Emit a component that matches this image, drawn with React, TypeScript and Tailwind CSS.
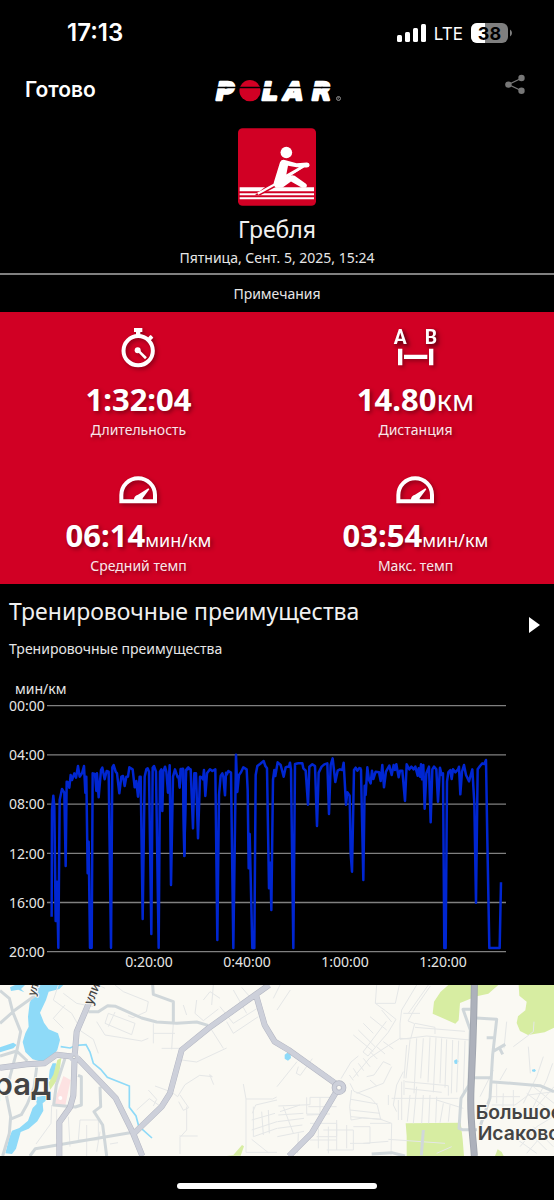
import type { ReactNode } from 'react';

type Segment = {
  x: number;
  y: number;
  points: string;
};

// Pace samples, three units to a pixel, stored in consecutive chunks
const paceSegments: Segment[] = [
  {
    x: 0,
    y: 0,
    points:
      '155,710 156,390 160,347 163,380 167,723 171,605 175,803 179,360 186,327 193,338 197,558 200,305 205,308 208,323 212,285 216,300 223,280 228,293 234,258 239,290 246,280 252,258 256,338 259,290 263,580 266,485 270,803 275,803 278,280 285,282 289,333 291,280 296,352 303,270 307,263 314,298 320,273 326,275 333,803 337,262 341,255 347,275 351,280 358,340 364,290 369,288 374,318 379,290 384,290 388,262 398,268 404,322 409,303 414,350 419,290 422,290 428,717 434,290 439,268 443,265 447,275 454,762 458,263 462,258 468,275 476,803 480,275 484,268 487,393 490,275 495,260 499,275 504,338 509,256 513,615 519,290 525,268 529,280 533,292 536,290 539,323 542,267 549,268 553,527 558,270 565,262 569,270',
  },
  {
    x: 540,
    y: 180,
    points:
      '-1,140 3,88 9,86 13,348 18,92 24,84 32,88 39,265 43,100 48,100 54,295 60,110 65,112 69,118 72,90 76,168 81,100 90,88 97,93 106,88 112,600 117,165 122,108 127,100 130,110 135,166 138,98 141,103 145,93 153,98 160,624 168,44 172,156 177,105 183,97 190,82 200,88 203,150 206,385 209,282 217,624 223,624 227,105 232,78 240,72 251,63 256,78 261,85 267,445 271,368 274,510 279,120 283,90 286,108 293,67 302,75 311,110 317,82 322,80 327,80 330,68 333,90 340,624 345,72 355,70 367,70 370,85 377,92 384,194 388,80 397,73 405,78 411,258 416,98 425,80 433,73 442,70 447,222 452,75 458,55 466,126 473,92 480,88 487,90 491,68 498,194 502,157 509,167 512,340 516,395 522,90 527,83 532,92 540,82',
  },
  {
    x: 1050,
    y: 180,
    points:
      '30,82 33,90 40,420 44,137 47,165 52,82 57,120 62,130 66,92 70,117 77,95 87,97 92,123 97,75 102,142 108,95 118,77 125,105 131,75 135,90 139,73 146,112 150,92 157,92 165,183 170,73 178,88 184,80 191,88 196,80 203,107 206,85 210,110 213,73 216,118 220,75 224,206 229,100 237,80 242,247 247,88 252,80 259,88 264,185 270,83 275,105 279,100 283,624 287,624 291,125 295,97 301,90 305,117 309,88 316,97 324,88 327,80 331,163 336,95 342,75 348,105 357,124 367,88 373,190 378,488 383,88 390,78 397,70 403,72 408,60 412,300 418,624 449,624 453,427',
  },
];

const paceTicks = ['00:00', '04:00', '08:00', '12:00', '16:00', '20:00'];
const timeTicks = ['0:20:00', '0:40:00', '1:00:00', '1:20:00'];

function StatusBar() {
  return (
    <div className="flex h-[66px] items-center justify-between pl-[67px] pr-[42px] font-['Inter',sans-serif]">
      <span className="text-2xl font-semibold">17:13</span>
      <div className="flex items-center gap-2">
        <svg width="29" height="18" viewBox="0 0 29 18" fill="white">
          <rect x="0" y="11" width="5" height="7" rx="1.5" />
          <rect x="8" y="8" width="5" height="10" rx="1.5" />
          <rect x="16" y="4" width="5" height="14" rx="1.5" />
          <rect x="24" y="0" width="5" height="18" rx="1.5" />
        </svg>
        <span className="pt-[2px] text-[17px] leading-5">LTE</span>
        <svg width="41" height="20" viewBox="0 0 41 20">
          <clipPath id="battery">
            <rect width="37" height="20" rx="6" />
          </clipPath>
          <g clipPath="url(#battery)">
            <rect width="37" height="20" fill="#7f7f7f" />
            <rect width="14" height="20" fill="white" />
          </g>
          <path d="M39 6.500q2 1 2 3.500t-2 3.500z" fill="#7f7f7f" />
          <text
            x="18.500"
            y="16.500"
            textAnchor="middle"
            className="text-lg font-bold">
            38
          </text>
        </svg>
      </div>
    </div>
  );
}

function PolarLogo() {
  return (
    <svg
      width="130"
      height="22"
      viewBox="212 80 130 22"
      className="overflow-visible"
      role="img"
      aria-label="Polar">
      <g
        fill="white"
        stroke="white"
        strokeWidth="2.500"
        strokeLinejoin="round"
        className="font-['DejaVu_Sans',sans-serif] text-[25px] font-bold italic">
        <text x="216" y="99.500">
          P
        </text>
        <text x="262 284 312" y="99.500">
          LAR
        </text>
      </g>
      <circle cx="250" cy="90.700" r="10.600" fill="#d10024" />
      <path d="M212 87.500h126" stroke="black" strokeWidth="1.600" />
      <circle
        cx="338.500"
        cy="98.500"
        r="2"
        fill="none"
        stroke="#aaa"
        strokeWidth="0.800"
      />
      <path d="M338 99.500v-2h1l-.5 1 .8 1" stroke="#aaa" strokeWidth=".4" fill="none" />
    </svg>
  );
}

function Header() {
  return (
    <header className="grid h-12 grid-cols-3 items-center px-[25px]">
      <button
        type="button"
        className="justify-self-start font-['Inter',sans-serif] text-[21px] font-semibold">
        Готово
      </button>
      <div className="justify-self-center pt-[2px]">
        <PolarLogo />
      </div>
      <button
        type="button"
        aria-label="Поделиться"
        className="justify-self-end pb-3 pr-1">
        <svg width="20" height="20" viewBox="0 0 20 20" fill="#777">
          <path
            d="M17 4 3.500 10.500 17 17"
            fill="none"
            stroke="#777"
            strokeWidth="1.300"
          />
          <circle cx="16.500" cy="4" r="3.200" />
          <circle cx="3.400" cy="10.600" r="3.200" />
          <circle cx="16.500" cy="16.700" r="3.200" />
        </svg>
      </button>
    </header>
  );
}

function RowingIcon() {
  return (
    <svg width="78" height="78" viewBox="203 175 234 233">
      <rect x="203" y="175" width="234" height="233" rx="14" fill="#d10024" />
      <g fill="white">
        <path d="M208 352h223v12H208zM208 370h223v6H208zM208 382h223v6H208z" />
        <path d="M253 376 290 347 324 347 270 376z" fill="#d10024" />
        <path d="M262 372 318 341" stroke="white" strokeWidth="7" />
        <circle cx="348" cy="248" r="17.500" />
        <path d="M329 277q5-10 17-6l33 9 31-2q8 1 8 8-1 7-9 7h-8l-50 29 10-5q6-2 12 1l34 24q6 6-1 12h-11l-33-19-26 19h-19q-10-7-6-18z" />
        <path d="M353 288 379 292 386 292 348 314z" fill="#d10024" />
        <path d="M400 289 354 319" stroke="white" strokeWidth="6" />
      </g>
    </svg>
  );
}

function StopwatchIcon() {
  return (
    <svg width="46" height="40" viewBox="347 54 138 120" fill="white">
      <circle
        cx="413.500"
        cy="122"
        r="44"
        fill="none"
        stroke="white"
        strokeWidth="12"
      />
      <path d="M401 54h25v12h-6v10h-13V66h-6z" />
      <path d="m442 84 8-9 4 2 5 6-9 9z" />
      <circle cx="412" cy="121" r="9" />
      <path
        d="m413 121 21 21"
        stroke="white"
        strokeWidth="8"
        strokeLinecap="square"
      />
    </svg>
  );
}

function DistanceIcon() {
  return (
    <svg
      width="46"
      height="40"
      viewBox="348 54 138 120"
      className="overflow-visible font-['Liberation_Sans_Narrow','Roboto',sans-serif] text-[58px] font-bold"
      fill="white">
      <text x="370" y="103" textAnchor="middle">
        A
      </text>
      <text x="462" y="103" textAnchor="middle">
        B
      </text>
      <path d="M363 116h13v50h-13zM456 116h13v50h-13zM381 134h70v13h-70z" />
    </svg>
  );
}

function GaugeIcon() {
  return (
    <svg width="46" height="40" viewBox="347 462 138 120" fill="white">
      <path
        d="M363 574v-19a50.500 50.500 0 0 1 101 0v19z"
        fill="none"
        stroke="white"
        strokeWidth="12"
      />
      <path d="M401 570q-1-12 12-16l31-19 3 3-20 27v6z" />
    </svg>
  );
}

function Stat({
  icon,
  value,
  unit,
  unitClass,
  label,
}: {
  icon: ReactNode;
  value: string;
  unit?: string;
  unitClass?: string;
  label: string;
}) {
  return (
    <div className="flex flex-col items-center pb-2 pt-4 text-shadow-[2px_2px_4px_rgb(0_0_0/0.4)]">
      <div className="drop-shadow-[2px_2px_2px_rgb(0_0_0/0.35)]">{icon}</div>
      <p className="mt-[11px] whitespace-nowrap text-[31px] leading-10">
        <span className="font-bold">{value}</span>
        {unit && <span className={unitClass}>{unit}</span>}
      </p>
      <p className="mt-px text-sm text-[#fbe6ea]">{label}</p>
    </div>
  );
}

function PaceChart() {
  return (
    <svg
      viewBox="0 0 554 305"
      className="block w-full text-sm"
      fill="#e6e6e6"
      role="img"
      aria-label="мин/км">
      <text x="15" y="14">
        мин/км
      </text>
      {paceTicks.map((tick, i) => (
        <g key={tick}>
          <path
            d={`M47 ${25.7 + i * 49.2}H506`}
            stroke="#808080"
            strokeWidth="1.300"
          />
          <text x="9" y={31 + i * 49.2}>
            {tick}
          </text>
        </g>
      ))}
      {timeTicks.map((tick, i) => (
        <text key={tick} x={149 + i * 98} y="287" textAnchor="middle">
          {tick}
        </text>
      ))}
      <g
        transform="scale(0.33333)"
        fill="none"
        stroke="#0026d1"
        strokeWidth="7.500"
        strokeLinejoin="round">
        {paceSegments.map((segment) => (
          <polyline
            key={segment.x}
            transform={`translate(${segment.x} ${segment.y})`}
            points={segment.points}
          />
        ))}
      </g>
    </svg>
  );
}

function RouteMap() {
  return (
    <svg
      viewBox="0 15 1662 513"
      className="block w-full bg-[#faf9f3]"
      role="img"
      aria-label="Карта">
      {/* water */}
      <g fill="#8edaf8">
        <path d="M105 15h85l-12 12-32 8-8 25-18 38 12 30 14 20 28 12 6 20-8 30-18 24-26 12-30-8-22-22-8-30 8-26 10-20-2-30 5-42 8-15z" />
        <path d="M30 22 45 15h30l-12 12 10 10-18-8-22 4z" />
        <path d="M0 202 40 188 50 195 40 205 0 217z" />
        <path d="M158 250h10l-2 28-10 22-10-2 3-28zM108 352l30-6 2 14-12 10 2 22-18 32-26 22-24 10-14 50-12 16-20-2 12-48 8-20 22-8 26-22 14-38 12-12z" />
        <path d="m23 0 8-6 10 6 1 10-9 8-10-6z" transform="translate(831 224)" />
        <path d="m1362 242 7-4 7 5-5 9-7-1zM1596 269l8-2 4 5-5 4-7-2z" />
      </g>
      <path
        d="m182 200 28 4 20-8 28-2 12 22 10 34 22 18 20 24 66 26v64l20 26 8 30 40 36"
        fill="none"
        stroke="#8edaf8"
        strokeWidth="5"
      />
      {/* parks */}
      <g fill="#d7eda2">
        <path d="M1345 15h150l-30 26-35 8-50 20-4 52-10 10-68-30 4-36 20-30z" />
        <path d="M1556 15h106v128l-28 14-50 8-24-12-10-24 4-20 22-18 4-26-22-18z" />
        <path d="M1217 430l165-2 6 50 4 50h-172v-60zM1485 528l8-20 12 8 6 12zM680 527l20-2 26-30 6 4-10 28zM172 240l12-6-8 60-26 36-4-22 14-24z" />
      </g>
      <path d="m190 288 22 12-16 76-36-4z" fill="#fde2e2" />
      <circle cx="181" cy="354" r="6" fill="#fff" />
      {/* footpaths and side streets */}
      <g fill="none" stroke="#e5e7e7" strokeWidth="3">
        <path d="M175 15 160 60 215 100 232 130M190 40l40 30 50 10M195 75l-35 40 30 30M295 15l20 10M345 15l25 20 75 30-6 30-40 18-15-6M325 100l80 30-10 34-80-34zM345 96l-20 44M290 125l25 40 50 8 60 10 20-8M235 148l45 30 15 42M460 130v60M460 160h65M485 205h60M520 128l-5 80M550 75l10 30M590 60l-5 40 25 22 45-35M610 60l20-25 30 20M640 15l-5 60M660 80l40 50 80-50M700 30l40 70M725 22l30 35M680 125l20 35 75-50M545 240l45 6 90-42M635 150l35 55M465 318l50 18 18 14 22-36 44-28 38 4-8-6 12 30M540 345l26 38-16 8-14-26M560 380v70l-20 22v50M538 468h55M410 390l38-34 38 26M445 330l25 28-10 20M205 410l5 90M155 375l-2 55-45 62M170 388v90M235 480h60v-60h-55zM260 435v100M300 455l-10 60M330 492l24-4" />
        <path d="M730 312l8 45h80l12-6M738 357v160h93M760 380v90l71-25M757 400l10-25 64-15M785 395l5 70M805 390l3 70M755 420l70-20M755 450l76-25M755 478l50 40" />
        <path d="M1130 15l-4 55 30 22 32 26-24 40-60 70-15-12 70-92M1126 70l60 0 12-55M1090 130l30 30M1110 110l50 40M1145 90l30 36M1060 165l60 50M1075 150l50 50M1075 228l-22 18-30 50M1205 90l45-75M1225 100l60-85M1205 90l-5 40v45l32 2 12-46-20-8 22-40 45-65M1210 100h50M1245 142l150 12M1245 130l60 12v20M1200 178l80-10 130 12M1200 175l-45 28-45 30-50 60M1150 185l30 22M1130 200l25 22M1110 215l22 22M1090 235l20 25M1075 250l16 22M1060 265l15 24M1048 285l12 16" />
        <path d="M1230 180l-12 115M1250 175l-8 165M1270 175l-8 120M1290 172l-6 135M1308 172l-8 165M1325 175l-5 135M1340 178l-5 145M1358 180l-4 160M1376 182l-6 155M1395 182l-5 155M1220 195l-8 100M1210 275l-20 40-10 60M1175 355h200M1215 305l130 12v30M1215 325l110 12M1212 300v45M1230 345l-8 80M1250 320l-10 110M1270 345l-5 85M1290 345l-4 85M1310 350l-3 78M1195 360v60M1205 305v115M1180 375l10 20M1165 345v30M1310 360l80 25M1330 370l-10 58M1350 375l-5 50" />
        <path d="M1050 310l12 24 50 20 20 22 10 42 33 12-2 96M1055 330l-6 50 4 40 34-6 60 4M1053 358l80 14M1050 390l90 10M1053 410l90 8M1110 300l20 18M1100 290l22-5 28-40 22 10M1070 340l80-30 25-50M835 378l95-4v-22h70M840 395l60-20M835 405l75-5M832 425l80-10M832 445l75-10M850 380l30 80M832 470l80-16M920 352v50h70M960 352v65M925 380h85M920 405l60-2M895 460l-2 60M930 480h80v30M930 430h80v40h-60M970 450h90v60h-80M1010 420v60M1060 440h50v50h-60M1110 430h62M1090 490l75-6M955 445v60M985 440v80M1040 435v70M1165 478l170 12M1310 520l45-20" />
        <path d="M1520 125l-8 80M1585 200l6 80M1540 200l60-45 2-30M1470 350h90M1490 310v60M1510 340l-2 60M1540 330v50M1475 375h70l40-30 77-10M1570 370l40-80 20-60M1590 400l50-100 18-50M1610 380l52-60M1580 340l80 60M1600 320l62 50M1560 500l50-60 50-30M1580 520l60-70M1540 470l70 50M1580 450l60 60M1600 440l60 60M1480 270l-40 80M1520 265l-20 35M831 90l40-60M831 320l60-75M895 260l-6 20 12 6 36-50M840 15l-20 40" />
      </g>
      {/* secondary roads */}
      <g fill="none" stroke="#d0d7da" strokeLinejoin="round" strokeWidth="9">
        <path d="M0 32 28 55 38 95 62 155 50 215 30 290 20 350 32 410 28 460 8 528M0 130 45 90 115 40M0 228l50-15 32 30M110 262l-8 60-20 50-18 32-34 14M195 235l-26 80-8 60 65 6 18-6v-85l-10-4M300 320l2 60-20 15 26 40 12 93" />
        <path d="M458 15l2 28 60 22v60M90 528l16-22 284-48M265 95l30 0 28-18 24 2 78 35 45 12 60 4 60-4 34 10" />
        <path d="M1411 88h-22l22 62-4 165-24 40-6 90 10 4h44M1428 114l62 4-12 106-8 130-28 80M1478 215l38-22M1498 203l10 20M1460 173h20M1420 293h50M1470 305l150 12 42 18M1115 522l60-4 40 10M1270 450l-6 76" />
      </g>
      {/* main roads */}
      <g fill="none" strokeLinejoin="round">
        <path
          d="M0 263 80 253 133 250 170 224l52 6M290 15 262 80 230 155l-6 72-4 120-10 35-32 45v101M232 234l115 120 52 105 28 69M399 463 485 380l25-40 35-130 80-65 140-100 42-30M768 45l26 90 30 50 42 25 140 100M1012 330 935 460l-68 68"
          stroke="#b3b6c2"
          strokeWidth="18"
        />
        <path
          d="M0 263 80 253 133 250 170 224l52 6M290 15 262 80 230 155l-6 72-4 120-10 35-32 45v101M232 234l115 120 52 105 28 69M399 463 485 380l25-40 35-130 80-65 140-100 42-30M768 45l26 90 30 50 42 25 140 100M1012 330 935 460l-68 68"
          stroke="#cdd0da"
          strokeWidth="15"
        />
        <path
          d="M1423 15c-2 150-6 220-10 310s5 130 10 203"
          stroke="#9ea3ad"
          strokeWidth="21"
        />
        <path
          d="M1423 15c-2 150-6 220-10 310s5 130 10 203"
          stroke="#adb1bb"
          strokeWidth="16"
        />
      </g>
      <circle cx="222" cy="232" r="15" fill="#cdd0da" />
      <circle cx="222" cy="232" r="4" fill="#faf9f3" stroke="#a9adba" strokeWidth="2" />
      <circle cx="1017" cy="323" r="14" fill="#faf9f3" stroke="#b3b6c2" strokeWidth="16" />
      <circle cx="1017" cy="323" r="14" fill="none" stroke="#cdd0da" strokeWidth="12" />
      <circle cx="1017" cy="323" r="7" fill="#faf9f3" stroke="#b3b6c2" strokeWidth="2" />
      {/* place names */}
      <g
        fill="#444"
        stroke="#faf9f3"
        strokeWidth="6"
        paintOrder="stroke"
        className="font-['Inter',sans-serif] font-semibold">
        <text x="154" y="344" textAnchor="end" className="text-[93px]">
          рад
        </text>
        <text x="1427" y="417" className="text-[58px]">
          Большое
        </text>
        <text x="1433" y="479" className="text-[58px]">
          Исаково
        </text>
        <text
          transform="translate(276 78) rotate(-68)"
          className="text-[40px] font-medium">
          улица
        </text>
        <text
          transform="translate(105 50) rotate(-72)"
          className="text-[34px] font-medium">
          улица
        </text>
      </g>
    </svg>
  );
}

function App() {
  return (
    <div className="min-h-screen overflow-hidden bg-black font-['Noto_Sans',sans-serif] text-white">
      <StatusBar />
      <Header />

      <main>
        <section className="flex flex-col items-center border-b-2 border-[#808080] pb-[5px] pt-[14px]">
          <RowingIcon />
          <h1 className="mt-[7px] text-[23px] leading-8 text-[#f0f0f0]">
            Гребля
          </h1>
          <p className="mt-[3px] text-sm text-[#e6e6e6]">
            Пятница, Сент. 5, 2025, 15:24
          </p>
        </section>

        <p className="py-2 text-center text-sm leading-[21px] text-[#e6e6e6]">
          Примечания
        </p>

        <section className="grid grid-cols-2 bg-[#d10024]">
          <Stat icon={<StopwatchIcon />} value="1:32:04" label="Длительность" />
          <Stat
            icon={<DistanceIcon />}
            value="14.80"
            unit="км"
            unitClass="text-[29px] leading-none"
            label="Дистанция"
          />
          <Stat
            icon={<GaugeIcon />}
            value="06:14"
            unit="мин/км"
            unitClass="text-lg leading-none"
            label="Средний темп"
          />
          <Stat
            icon={<GaugeIcon />}
            value="03:54"
            unit="мин/км"
            unitClass="text-lg leading-none"
            label="Макс. темп"
          />
        </section>

        <section>
          <div className="flex items-center justify-between pb-[21px] pl-[9px] pr-[14px] pt-[11px]">
            <div>
              <h2 className="text-[23px] leading-8 text-[#f0f0f0]">
                Тренировочные преимущества
              </h2>
              <p className="mt-3 text-sm text-[#e6e6e6]">
                Тренировочные преимущества
              </p>
            </div>
            <button type="button" aria-label="Открыть" className="pb-1">
              <svg width="11" height="16" viewBox="0 0 11 16" fill="white">
                <path d="M0 0 11 8 0 16z" />
              </svg>
            </button>
          </div>
          <PaceChart />
        </section>

        <RouteMap />
      </main>

      <div className="mx-auto mt-[27px] h-[6px] w-[36%] rounded-full bg-white" />
    </div>
  );
}

export default App;
